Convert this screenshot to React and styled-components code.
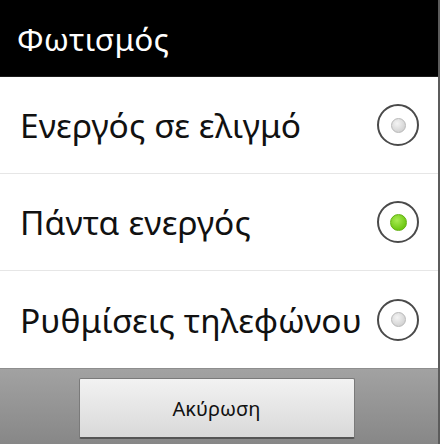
import React, { useState } from "react";
import styled, { createGlobalStyle } from "styled-components";

const GlobalStyle = createGlobalStyle`
    html, body {
        margin: 0;
        padding: 0;
        background: #000;
    }
    body {
        font-family: "Noto Sans", "Open Sans", sans-serif;
    }
`;

const Screen = styled.div`
    display: flex;
    width: 440px;
    height: 444px;
    overflow: hidden;
`;

const Dialog = styled.div`
    display: flex;
    flex-direction: column;
    width: 438px;
    height: 444px;
`;

const Edge = styled.div`
    width: 2px;
    background: #5c5c5c;
`;

const TitleBar = styled.div`
    height: 76px;
    display: flex;
    align-items: center;
    padding-left: 17px;
    background: #000;
    border-bottom: 1px solid #1c1c1c;
    color: #fff;
    font-size: 31.5px;
    letter-spacing: 0.3px;
`;

const Options = styled.div`
    display: flex;
    flex-direction: column;
    background: #fff;
`;

const Row = styled.label`
    display: flex;
    align-items: center;
    justify-content: space-between;
    height: 97px;
    padding: 0 19px 0 20px;
    box-sizing: border-box;
    border-bottom: ${p => (p.last ? "none" : "1px solid #e6e6e6")};
    cursor: pointer;
`;

const Label = styled.span`
    font-size: 33.5px;
    letter-spacing: 0.1px;
    color: #111;
    white-space: nowrap;
`;

const Radio = styled.span`
    flex: none;
    width: 38px;
    height: 38px;
    border-radius: 50%;
    border: 2px solid #4a4a4a;
    display: flex;
    align-items: center;
    justify-content: center;
    background: #fff;
`;

const Dot = styled.span`
    width: ${p => (p.on ? 15 : 13)}px;
    height: ${p => (p.on ? 15 : 13)}px;
    border-radius: 50%;
    background: ${p =>
        p.on
            ? "radial-gradient(circle at 40% 35%, #a8ec52, #6fc814 70%)"
            : "radial-gradient(circle at 40% 35%, #f4f4f4, #d0d0d0 80%)"};
    border: 1px solid ${p => (p.on ? "#62b010" : "#b8b8b8")};
`;

const ButtonBar = styled.div`
    flex: 1;
    display: flex;
    justify-content: center;
    padding-top: 9px;
    box-sizing: border-box;
    background: linear-gradient(#a2a2a2, #878787);
    border-top: 1px solid #8e8e8e;
`;

const CancelButton = styled.button`
    width: 276px;
    height: 61px;
    margin-right: 5px;
    border: 1px solid #7a7a7a;
    border-bottom: 2px solid #555;
    border-radius: 2px;
    background: linear-gradient(#f2f2f2, #d9d9d9);
    font-family: "Noto Sans", "Open Sans", sans-serif;
    font-size: 20px;
    color: #111;
    cursor: pointer;
`;

const options = ["Ενεργός σε ελιγμό", "Πάντα ενεργός", "Ρυθμίσεις τηλεφώνου"];

export default function App() {
    const [selected, setSelected] = useState(1);

    return (
        <Screen>
            <GlobalStyle />
            <Dialog>
                <TitleBar>Φωτισμός</TitleBar>
                <Options>
                    {options.map((text, i) => (
                        <Row key={i} last={i === options.length - 1} onClick={() => setSelected(i)}>
                            <Label>{text}</Label>
                            <Radio>
                                <Dot on={selected === i} />
                            </Radio>
                        </Row>
                    ))}
                </Options>
                <ButtonBar>
                    <CancelButton>Ακύρωση</CancelButton>
                </ButtonBar>
            </Dialog>
            <Edge />
        </Screen>
    );
}
